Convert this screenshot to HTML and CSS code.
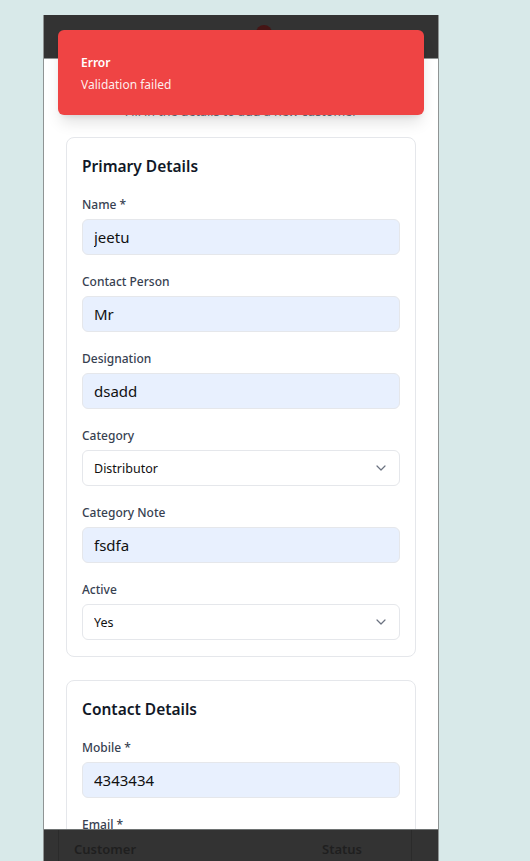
FILE: index.html
```html
<!DOCTYPE html>
<html lang="en">
<head>
<meta charset="utf-8">
<title>Add Customer</title>
<link rel="stylesheet" href="styles.css">
</head>
<body>
<div class="frame">
  <header class="app-header">
    <span class="avatar"></span>
  </header>

  <section class="modal">
    <div class="modal-head">
      <p class="modal-subtitle">Fill in the details to add a new customer</p>
    </div>

    <div class="card">
      <h3 class="card-title">Primary Details</h3>
      <div class="field">
        <label class="field-label">Name *</label>
        <input class="field-input filled" value="jeetu">
      </div>
      <div class="field">
        <label class="field-label">Contact Person</label>
        <input class="field-input filled" value="Mr">
      </div>
      <div class="field">
        <label class="field-label">Designation</label>
        <input class="field-input filled" value="dsadd">
      </div>
      <div class="field">
        <label class="field-label">Category</label>
        <div class="select-wrap">
          <select class="field-select"><option>Distributor</option></select>
          <svg class="chevron" viewBox="0 0 10 6" width="10" height="6"><polyline points="1,1 5,5 9,1" fill="none" stroke="#6b7280" stroke-width="1.2" stroke-linecap="round" stroke-linejoin="round"/></svg>
        </div>
      </div>
      <div class="field">
        <label class="field-label">Category Note</label>
        <input class="field-input filled" value="fsdfa">
      </div>
      <div class="field">
        <label class="field-label">Active</label>
        <div class="select-wrap">
          <select class="field-select"><option>Yes</option></select>
          <svg class="chevron" viewBox="0 0 10 6" width="10" height="6"><polyline points="1,1 5,5 9,1" fill="none" stroke="#6b7280" stroke-width="1.2" stroke-linecap="round" stroke-linejoin="round"/></svg>
        </div>
      </div>
    </div>

    <div class="card">
      <h3 class="card-title">Contact Details</h3>
      <div class="field">
        <label class="field-label">Mobile *</label>
        <input class="field-input filled" value="4343434">
      </div>
      <div class="field">
        <label class="field-label">Email *</label>
        <input class="field-input filled" value="">
      </div>
    </div>
  </section>

  <footer class="table-band">
    <div class="table-head">
      <span class="th th-customer">Customer</span>
      <span class="th th-status">Status</span>
    </div>
  </footer>

  <div class="toast">
    <div class="toast-title">Error</div>
    <div class="toast-text">Validation failed</div>
  </div>
</div>
</body>
</html>
```

FILE: styles.css
```css
* { box-sizing: border-box; }

html, body {
  margin: 0;
  padding: 0;
  overflow: hidden;
}

body {
  background: #d8e9e9;
  font-family: "Noto Sans", "Open Sans", sans-serif;
  color: #111827;
}

.frame {
  position: relative;
  margin: 15px 0 0 43px;
  width: 396px;
  height: 846px;
  display: flex;
  flex-direction: column;
  border-left: 1px solid #8f9494;
  border-right: 1px solid #8f9494;
  overflow: hidden;
}

.app-header {
  height: 43px;
  flex: none;
  background: #333333;
  display: flex;
  justify-content: center;
  padding-top: 10px;
}

.avatar {
  width: 16px;
  height: 16px;
  border-radius: 50%;
  background: #461515;
  margin-left: 45px;
}

.modal {
  height: 771px;
  flex: none;
  background: #ffffff;
  border-top: 1px solid #8f9494;
  padding: 0 22px;
  overflow: hidden;
}

.modal-head {
  padding-top: 43px;
  text-align: center;
}

.modal-subtitle {
  margin: 0;
  font-size: 12.5px;
  line-height: 20px;
  color: #6b7280;
}

.card {
  margin-top: 15px;
  border: 1px solid #e5e7eb;
  border-radius: 8px;
  padding: 16px 15px 16px;
  display: flex;
  flex-direction: column;
  gap: 17px;
}

.card + .card {
  margin-top: 23px;
}

.card-title {
  margin: 0;
  font-size: 15.5px;
  line-height: 24px;
  font-weight: 600;
  color: #111827;
}

.field {
  display: flex;
  flex-direction: column;
  gap: 4px;
}

.field-label {
  font-size: 12px;
  line-height: 20px;
  font-weight: 500;
  color: #374151;
}

.field-input,
.field-select {
  width: 100%;
  height: 36px;
  border: 1px solid #e5e7eb;
  border-radius: 6px;
  padding: 0 11px;
  font-family: inherit;
  color: #111111;
  outline: none;
}

.field-input {
  font-size: 15px;
}

.field-input.filled {
  background: #e8f0fe;
}

.select-wrap {
  position: relative;
}

.field-select {
  appearance: none;
  -webkit-appearance: none;
  background: #ffffff;
  font-size: 12.5px;
}

.chevron {
  position: absolute;
  right: 14px;
  top: 15px;
  pointer-events: none;
}

.table-band {
  flex: 1;
  background: #333333;
  border-top: 1px solid #6e7272;
  padding: 0 26px 0 14px;
}

.table-head {
  height: 100%;
  border-left: 1px solid #2b2b2b;
  border-right: 1px solid #2b2b2b;
  display: flex;
  align-items: flex-start;
  padding-top: 10px;
}

.th {
  font-size: 13px;
  line-height: 18px;
  font-weight: 600;
  color: #1f1f1f;
}

.th-customer {
  margin-left: 15px;
}

.th-status {
  margin-left: auto;
  margin-right: 49px;
}

.toast {
  position: absolute;
  left: 14px;
  top: 15px;
  width: 366px;
  height: 85px;
  background: #ef4444;
  border-radius: 6px;
  box-shadow: 0 10px 15px -3px rgba(0,0,0,0.12), 0 4px 6px -4px rgba(0,0,0,0.12);
  padding: 2px 23px 0;
  display: flex;
  flex-direction: column;
  justify-content: center;
  gap: 4px;
  color: #ffffff;
}

.toast-title {
  font-size: 12px;
  line-height: 18px;
  font-weight: 600;
}

.toast-text {
  font-size: 12px;
  line-height: 18px;
  color: rgba(255,255,255,0.92);
}
```
